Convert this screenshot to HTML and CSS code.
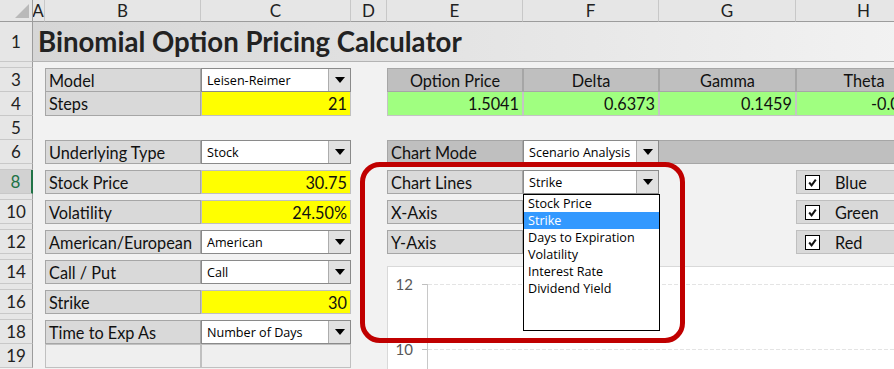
FILE: index.html
```html
<!DOCTYPE html>
<html lang="en">
<head>
    <meta charset="UTF-8">
    <title>Binomial Option Pricing Calculator</title>
    <link rel="stylesheet" href="styles.css">
</head>
<body>
    <div class="sheet">
        <!-- column headers -->
        <div class="corner"></div>
        <div class="ch cA">A</div>
        <div class="ch cB">B</div>
        <div class="ch cC">C</div>
        <div class="ch cD">D</div>
        <div class="ch cE">E</div>
        <div class="ch cF">F</div>
        <div class="ch cG">G</div>
        <div class="ch cH">H</div>

        <!-- row headers -->
        <div class="rh r1">1</div>
        <div class="rh r2"></div>
        <div class="rh r3">3</div>
        <div class="rh r4">4</div>
        <div class="rh r5">5</div>
        <div class="rh r6">6</div>
        <div class="rh r7"></div>
        <div class="rh r8 on">8</div>
        <div class="rh r9"></div>
        <div class="rh r10">10</div>
        <div class="rh r11"></div>
        <div class="rh r12">12</div>
        <div class="rh r13"></div>
        <div class="rh r14">14</div>
        <div class="rh r15"></div>
        <div class="rh r16">16</div>
        <div class="rh r17"></div>
        <div class="rh r18">18</div>
        <div class="rh r19">19</div>

        <!-- title -->
        <div class="title r1">Binomial Option Pricing Calculator</div>

        <!-- inputs -->
        <div class="cell lbl r3 cB">Model</div>
        <div class="dd r3 cC"><span>Leisen-Reimer</span><i class="arrow"></i></div>
        <div class="cell lbl r4 cB">Steps</div>
        <div class="cell val r4 cC">21</div>

        <div class="cell lbl r6 cB">Underlying Type</div>
        <div class="dd r6 cC"><span>Stock</span><i class="arrow"></i></div>
        <div class="cell lbl r8 cB">Stock Price</div>
        <div class="cell val r8 cC">30.75</div>
        <div class="cell lbl r10 cB">Volatility</div>
        <div class="cell val r10 cC">24.50%</div>
        <div class="cell lbl r12 cB">American/European</div>
        <div class="dd r12 cC"><span>American</span><i class="arrow"></i></div>
        <div class="cell lbl r14 cB">Call / Put</div>
        <div class="dd r14 cC"><span>Call</span><i class="arrow"></i></div>
        <div class="cell lbl r16 cB">Strike</div>
        <div class="cell val r16 cC">30</div>
        <div class="cell lbl r18 cB">Time to Exp As</div>
        <div class="dd r18 cC"><span>Number of Days</span><i class="arrow"></i></div>
        <div class="cell blank r19 cB"></div>
        <div class="cell blank r19 cC"></div>

        <!-- results -->
        <div class="cell hd r3 cE">Option Price</div>
        <div class="cell hd r3 cF">Delta</div>
        <div class="cell hd r3 cG">Gamma</div>
        <div class="cell hd r3 cH">Theta</div>
        <div class="cell res r4 cE">1.5041</div>
        <div class="cell res r4 cF">0.6373</div>
        <div class="cell res r4 cG">0.1459</div>
        <div class="cell res r4 cH">-0.0089</div>

        <!-- chart settings -->
        <div class="cell dark r6 cE">Chart Mode</div>
        <div class="dd r6 cF"><span>Scenario Analysis</span><i class="arrow"></i></div>
        <div class="band r6 cGH"></div>
        <div class="cell lbl r8 cE">Chart Lines</div>
        <div class="dd r8 cF"><span>Strike</span><i class="arrow"></i></div>
        <div class="cell lbl r10 cE">X-Axis</div>
        <div class="dd r10 cF"><span></span><i class="arrow"></i></div>
        <div class="cell lbl r12 cE">Y-Axis</div>
        <div class="dd r12 cF"><span></span><i class="arrow"></i></div>

        <div class="chk r8 cH"><span class="box"><svg width="13" height="13" viewBox="0 0 13 13"><path d="M3.2 6.5 L5.6 9.4 L9.8 3.6" fill="none" stroke="#111" stroke-width="2"/></svg></span>Blue</div>
        <div class="chk r10 cH"><span class="box"><svg width="13" height="13" viewBox="0 0 13 13"><path d="M3.2 6.5 L5.6 9.4 L9.8 3.6" fill="none" stroke="#111" stroke-width="2"/></svg></span>Green</div>
        <div class="chk r12 cH"><span class="box"><svg width="13" height="13" viewBox="0 0 13 13"><path d="M3.2 6.5 L5.6 9.4 L9.8 3.6" fill="none" stroke="#111" stroke-width="2"/></svg></span>Red</div>

        <!-- floating chart -->
        <div class="chart">
            <svg width="560" height="110" viewBox="0 0 560 110">
                <line x1="34" y1="17.5" x2="560" y2="17.5" stroke="#e4e4e4" stroke-dasharray="4 2"/>
                <line x1="34" y1="82.5" x2="560" y2="82.5" stroke="#e4e4e4" stroke-dasharray="4 2"/>
                <line x1="34" y1="17.5" x2="39" y2="17.5" stroke="#bfbfbf"/>
                <line x1="34" y1="82.5" x2="39" y2="82.5" stroke="#bfbfbf"/>
                <line x1="39.5" y1="17" x2="39.5" y2="110" stroke="#c8c8c8"/>
                <text x="25" y="23" text-anchor="end" class="axis">12</text>
                <text x="25" y="88" text-anchor="end" class="axis">10</text>
            </svg>
        </div>

        <!-- open dropdown -->
        <div class="ddlist">
            <div>Stock Price</div>
            <div class="sel">Strike</div>
            <div>Days to Expiration</div>
            <div>Volatility</div>
            <div>Interest Rate</div>
            <div>Dividend Yield</div>
        </div>

        <div class="ring"></div>
    </div>
</body>
</html>
```

FILE: styles.css
```css
html, body { height: 369px; }
body { margin: 0; background: #f2f2f2; overflow: hidden; font-family: Lato, "Liberation Sans", sans-serif; color: #111; }
.sheet { position: relative; width: 932px; display: grid; grid-template-columns: 33px 12px 156px 150px 36px 136px 136px 137px 136px; grid-template-rows: 22px 40px 6px 24px 24px 24px 24px 6px 24px 6px 24px 6px 24px 6px 24px 6px 24px 6px 24px 24px; }
.sheet > div { box-sizing: border-box; }

/* grid placement */
.r1 { grid-row: 2; } .r2 { grid-row: 3; } .r3 { grid-row: 4; } .r4 { grid-row: 5; } .r5 { grid-row: 6; }
.r6 { grid-row: 7; } .r7 { grid-row: 8; } .r8 { grid-row: 9; } .r9 { grid-row: 10; } .r10 { grid-row: 11; }
.r11 { grid-row: 12; } .r12 { grid-row: 13; } .r13 { grid-row: 14; } .r14 { grid-row: 15; } .r15 { grid-row: 16; }
.r16 { grid-row: 17; } .r17 { grid-row: 18; } .r18 { grid-row: 19; } .r19 { grid-row: 20; }
.cA { grid-column: 2; } .cB { grid-column: 3; } .cC { grid-column: 4; } .cD { grid-column: 5; }
.cE { grid-column: 6; } .cF { grid-column: 7; } .cG { grid-column: 8; } .cH { grid-column: 9; } .cGH { grid-column: 8 / 10; }

/* headers */
.corner { grid-row: 1; grid-column: 1; background: #e6e6e6; border-right: 1px solid #9c9c9c; border-bottom: 1px solid #9c9c9c; position: relative; }
.corner::after { content: ""; position: absolute; right: 3px; bottom: 3px; border-left: 14px solid transparent; border-bottom: 14px solid #b9b9b9; }
.ch { grid-row: 1; background: #e6e6e6; border-right: 1px solid #c8c8c8; border-bottom: 1px solid #9c9c9c; text-align: center; font-size: 17px; line-height: 22px; color: #222; white-space: nowrap; }
.ch.cA { overflow: visible; text-indent: -1px; }
.rh { grid-column: 1; background: #e6e6e6; border-right: 1px solid #9c9c9c; border-bottom: 1px solid #c8c8c8; display: flex; align-items: center; justify-content: center; font-size: 17px; color: #222; }
.rh.on { background: #d2d2d2; color: #217346; border-right: 2px solid #217346; }

.title { grid-column: 2 / 10; background: linear-gradient(to right, #d6d6d6, #f3f3f3); border-bottom: 1px solid #b4b4b4; font-weight: bold; font-size: 27.6px; padding-left: 5px; display: flex; align-items: center; color: #222; }

/* cells */
.cell { display: flex; align-items: center; font-size: 16.3px; white-space: nowrap; overflow: hidden; padding: 0 3px; border: 1px solid #a6a6a6; }
.lbl { background: #d9d9d9; }
.r4.lbl { border-top: none; }
.val { background: #ffff00; justify-content: flex-end; border-color: #c0c0c0; }
.r4.val { border-top: none; }
.blank { background: #efefef; border-color: #c0c0c0; }
.hd { background: #bfbfbf; justify-content: center; }
.res { background: #a0ff80; justify-content: flex-end; border-color: #c4c4c4; border-top: none; }
.dark { background: #bfbfbf; }
.band { background: #bfbfbf; border-top: 1px solid #a6a6a6; border-bottom: 1px solid #a6a6a6; }

/* dropdowns */
.dd { display: flex; background: #fff; border: 1px solid #8a8a8a; font-family: "Open Sans", sans-serif; font-size: 12.6px; color: #000; }
.dd span { flex: 1; display: flex; align-items: center; padding-left: 5px; white-space: nowrap; overflow: hidden; }
.dd .arrow { width: 21px; background: #e1e1e1; border-left: 1px solid #adadad; display: flex; align-items: center; justify-content: center; }
.dd .arrow::after { content: ""; border-left: 5px solid transparent; border-right: 5px solid transparent; border-top: 6px solid #000; }

.ddlist { position: absolute; left: 523px; top: 194px; width: 137px; height: 137px; box-sizing: border-box; background: #fff; border: 1px solid #000; font-family: "Open Sans", sans-serif; font-size: 12.6px; color: #000; z-index: 3; }
.ddlist div { height: 17px; line-height: 17px; padding-left: 4px; white-space: nowrap; }
.ddlist .sel { background: #3399ff; color: #fff; }

/* checkboxes */
.chk { display: flex; align-items: center; gap: 15px; padding-left: 8px; background: #d9d9d9; border: 1px solid #bfbfbf; font-size: 16.3px; }
.chk .box { width: 15px; height: 15px; box-sizing: border-box; border: 1px solid #000; background: #fff; display: flex; align-items: center; justify-content: center; }
.chk .box svg { display: block; }

/* chart object */
.chart { position: absolute; left: 387px; top: 266px; width: 560px; height: 120px; background: #fff; border: 1px solid #d9d9d9; z-index: 2; }
.chart svg { display: block; }
.axis { font-family: Lato, sans-serif; font-size: 15px; fill: #595959; }

.ring { position: absolute; left: 360px; top: 162px; width: 325px; height: 181px; box-sizing: border-box; border: 5px solid #c00000; border-radius: 20px; z-index: 4; }
```
